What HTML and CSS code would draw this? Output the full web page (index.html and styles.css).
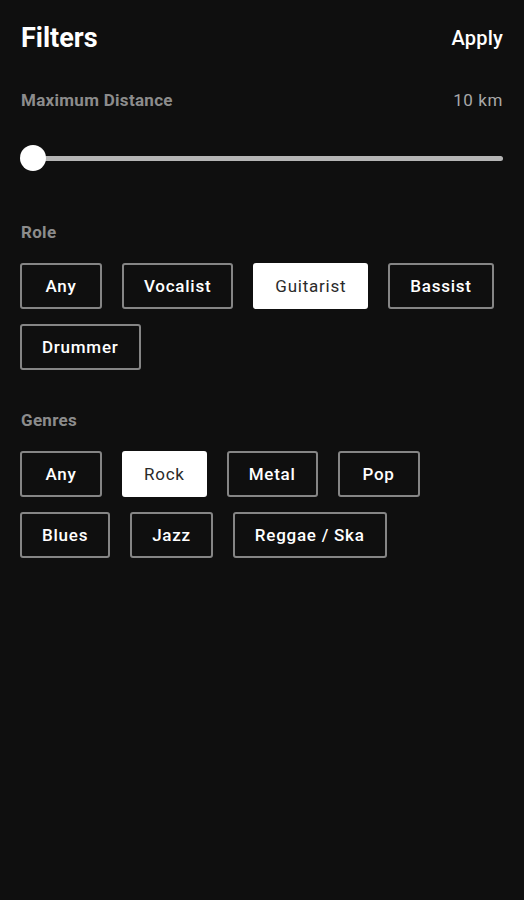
FILE: index.html
```html
<!DOCTYPE html>
<html>
<head>
<meta charset="utf-8">
<link rel="stylesheet" href="styles.css">
</head>
<body>
<div class="screen">
  <header class="topbar">
    <h1 class="title">Filters</h1>
    <span class="apply">Apply</span>
  </header>
  <div class="row-label">
    <span class="label">Maximum Distance</span>
    <span class="value">10 km</span>
  </div>
  <div class="slider">
    <div class="track"></div>
    <div class="thumb"></div>
  </div>
  <div class="section-label">Role</div>
  <div class="chips">
    <span class="chip">Any</span>
    <span class="chip">Vocalist</span>
    <span class="chip selected">Guitarist</span>
    <span class="chip">Bassist</span>
    <span class="chip">Drummer</span>
  </div>
  <div class="section-label genres">Genres</div>
  <div class="chips">
    <span class="chip">Any</span>
    <span class="chip selected">Rock</span>
    <span class="chip">Metal</span>
    <span class="chip">Pop</span>
    <span class="chip">Blues</span>
    <span class="chip">Jazz</span>
    <span class="chip">Reggae / Ska</span>
  </div>
</div>
</body>
</html>
```

FILE: styles.css
```css
* { box-sizing: border-box; }
html, body {
  margin: 0;
  padding: 0;
  background: #0f0f0f;
  height: 100%;
}
body {
  font-family: Roboto, "Liberation Sans", sans-serif;
  color: #fff;
}
.screen {
  padding: 0 21px 0 20px;
}
.topbar {
  display: flex;
  justify-content: space-between;
  align-items: flex-start;
  padding-top: 22px;
  padding-left: 1px;
}
.title {
  margin: 0;
  font-size: 27px;
  font-weight: 700;
  line-height: 32px;
}
.apply {
  margin-top: 4px;
  font-size: 20px;
  line-height: 24px;
  font-weight: 500;
  letter-spacing: 0.2px;
}
.row-label {
  display: flex;
  justify-content: space-between;
  align-items: baseline;
  margin-top: 36px;
  padding-left: 1px;
  line-height: 20px;
}
.label {
  font-size: 17px;
  font-weight: 700;
  color: #8c8c8c;
  letter-spacing: 0.3px;
}
.value {
  font-size: 17px;
  color: #a8a8a8;
  letter-spacing: 0.6px;
}
.slider {
  position: relative;
  height: 26px;
  margin-top: 35px;
}
.track {
  position: absolute;
  left: 13px;
  right: 0;
  top: 11px;
  height: 5px;
  border-radius: 3px;
  background: #b5b5b5;
}
.thumb {
  position: absolute;
  left: 0;
  top: 0;
  width: 26px;
  height: 26px;
  border-radius: 50%;
  background: #fff;
}
.section-label {
  margin-top: 51px;
  padding-left: 1px;
  font-size: 17px;
  font-weight: 700;
  color: #8c8c8c;
  line-height: 20px;
  letter-spacing: 0.3px;
}
.section-label.genres {
  margin-top: 40px;
}
.chips {
  display: flex;
  flex-wrap: wrap;
  gap: 15px 20px;
  margin-top: 21px;
}
.chip {
  display: flex;
  align-items: center;
  justify-content: center;
  min-width: 82px;
  height: 46px;
  padding: 0 20px;
  border: 2px solid #858585;
  border-radius: 3px;
  font-size: 17px;
  font-weight: 500;
  letter-spacing: 0.75px;
  color: #fff;
}
.chip.selected {
  background: #fff;
  border-color: #fff;
  color: #2a2a2a;
  font-weight: 400;
}
```
